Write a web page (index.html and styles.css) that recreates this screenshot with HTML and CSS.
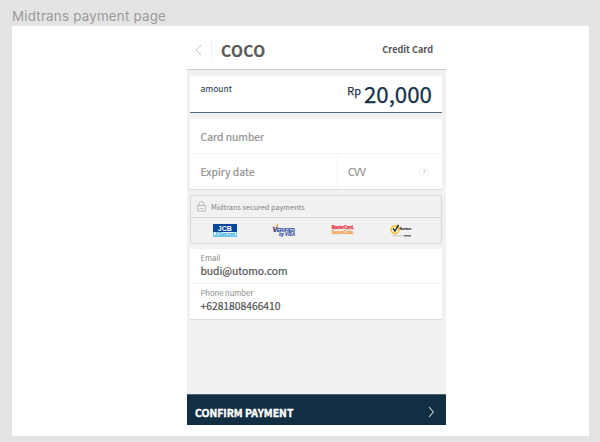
FILE: index.html
```html
<!DOCTYPE html>
<html lang="en">
<head>
<meta charset="utf-8">
<title>Midtrans payment page</title>
<link rel="stylesheet" href="styles.css">
</head>
<body>
<h1 class="frame-title">Midtrans payment page</h1>
<main class="frame">
  <section class="phone">
    <header class="header">
      <svg class="back" width="7" height="12" viewBox="0 0 7 12"><path d="M6 1 1.2 6 6 11"/></svg>
      <span class="merchant">COCO</span>
      <span class="method">Credit Card</span>
    </header>
    <div class="content">
      <div class="card amount">
        <span class="amount-label">amount</span>
        <span class="price"><span class="currency">Rp</span><span class="value">20,000</span></span>
      </div>
      <div class="card">
        <div class="field number"><span class="placeholder">Card number</span></div>
        <div class="field split">
          <div class="expiry"><span class="placeholder">Expiry date</span></div>
          <div class="cvv"><span class="placeholder tight">CVV</span><span class="help">?</span></div>
        </div>
      </div>
      <div class="secured">
        <div class="secured-title">
          <svg width="9" height="11" viewBox="0 0 9 11"><path d="M2.2 4.5V2.8a2.3 2.3 0 0 1 4.6 0v1.7M.6 4.5h7.8v5.6H.6zM2.5 7.5h4"/></svg>
          <span>Midtrans secured payments</span>
        </div>
        <div class="logos">
          <svg width="24" height="13" viewBox="0 0 24 13">
            <rect width="24" height="13" fill="#27a9df"/><rect width="24" height="8" fill="#08469b"/><rect x=".6" y="8" width="22.8" height="4.4" fill="#d9f3fc"/>
            <text x="4.8" y="6.8" class="jcb" textLength="14" lengthAdjust="spacingAndGlyphs">JCB</text><text x="1.6" y="12" class="jsecure" textLength="20.5" lengthAdjust="spacingAndGlyphs">J/Secure</text>
          </svg>
          <svg width="24" height="13" viewBox="0 0 24 13">
            <path d="M.8 2.5 3.3 7 5.6.3" fill="none" stroke="#f2a33a" stroke-width="1.3"/>
            <text x="0.6" y="7.8" class="visa visa-v">V</text><text x="4.8" y="7.8" class="visa" textLength="18" lengthAdjust="spacingAndGlyphs">ERIFIED</text><text x="7" y="12.3" class="visa" textLength="16" lengthAdjust="spacingAndGlyphs">by VISA</text>
          </svg>
          <svg width="24" height="12" viewBox="0 0 24 12">
            <text x="0.8" y="5.4" class="mc red" textLength="22" lengthAdjust="spacingAndGlyphs">MasterCard.</text><text x="0.8" y="10.2" class="mc orange" textLength="22" lengthAdjust="spacingAndGlyphs">SecureCode.</text>
          </svg>
          <svg width="24" height="13" viewBox="0 0 24 13">
            <path d="M6 2h16.5v6.5H6" fill="#f6f6f6" stroke="#e4e4e4" stroke-width=".5"/>
            <circle cx="5" cy="5.8" r="3.8" fill="#fff" stroke="#f5bd25" stroke-width="1.6"/>
            <path d="m3 4.5 2 2.6L8.5.8" fill="none" stroke="#222" stroke-width="1.4"/>
            <text x="9.6" y="6.4" class="norton" textLength="11.5" lengthAdjust="spacingAndGlyphs">Norton</text>
            <path d="M2 11.8h10" stroke="#bbb" stroke-width=".8"/><path d="M13.5 11.8h7.5" stroke="#555" stroke-width="1.2"/>
          </svg>
        </div>
      </div>
      <div class="card contact">
        <div class="field filled"><span class="label">Email</span><span class="text mail">budi@utomo.com</span></div>
        <div class="field filled"><span class="label">Phone number</span><span class="text">+6281808466410</span></div>
      </div>
    </div>
    <footer class="confirm">
      <span>CONFIRM PAYMENT</span>
      <svg width="7" height="12" viewBox="0 0 7 12"><path d="m1 1 4.3 5L1 11"/></svg>
    </footer>
  </section>
</main>
</body>
</html>
```

FILE: styles.css
```css
* { box-sizing: border-box; }
body {
  margin: 0;
  width: 600px;
  height: 442px;
  overflow: hidden;
  padding: 6px 11px 6px 12px;
  background: #e4e4e4;
  font-family: "Noto Sans CJK SC", "Noto Sans", sans-serif;
}
.frame-title {
  margin: 0;
  height: 20px;
  font: 400 13.4px/20px Inter, sans-serif;
  letter-spacing: 0.19px;
  color: #9b9b9b;
  white-space: nowrap;
}
.frame { height: 410px; background: #fff; padding-left: 175px; }
.phone { display: flex; flex-direction: column; width: 259px; height: 399px; background: #f1f1f1; }
.header {
  display: flex;
  align-items: center;
  height: 44px;
  padding: 4px 13px 0 8px;
  border-bottom: 1px solid #cbcbcb;
  background: #fff;
}
.back { fill: none; stroke: #c4c4c4; stroke-width: 1; }
.merchant {
  margin-left: 9px;
  padding-left: 9px;
  border-left: 1px solid #f1f1f1;
  font-size: 15.5px;
  line-height: 24px;
  font-weight: 700;
  letter-spacing: 0.4px;
  color: #5a5a5a;
  -webkit-text-stroke: 0.2px #5a5a5a;
}
.method { margin-left: auto; font-size: 9.1px; line-height: 14px; padding-bottom: 1px; font-weight: 700; color: #555; }
.content { flex: 1; display: flex; flex-direction: column; gap: 6px; padding: 6px 4px 0 3px; }
.card { height: 71px; background: #fff; border-bottom: 1px solid #dedede; }
.amount {
  display: flex;
  justify-content: space-between;
  height: 37px;
  padding: 0 10px;
  border-bottom: 1px solid #4d6779;
  color: #173149;
}
.amount-label { font-size: 8.5px; line-height: 25px; padding-left: 0.5px; }
.price { display: flex; gap: 3px; -webkit-text-stroke: 0.25px #173149; }
.currency { font-size: 10.8px; line-height: 29px; }
.value { font-size: 22.3px; line-height: 35px; }
.field { height: 35px; padding: 0 10px 0 10.5px; display: flex; align-items: center; }
.field:first-child { border-bottom: 1px solid #f3f3f3; }
.field.number { padding-top: 2px; }
.placeholder { font-size: 10.4px; line-height: 16px; color: #919191; -webkit-text-stroke: 0.2px #919191; }
.tight { letter-spacing: -0.5px; }
.field.split { padding: 0; }
.expiry { display: flex; width: 147px; padding-left: 10.5px; }
.cvv {
  flex: 1;
  height: 35px;
  display: flex;
  align-items: center;
  justify-content: space-between;
  padding: 0 13px 0 10px;
  border-left: 1px solid #f3f3f3;
}
.help {
  width: 10px;
  height: 10px;
  border: 1px solid #f0f0f0;
  border-radius: 50%;
  text-align: center;
  font-size: 6px;
  line-height: 8px;
  font-weight: 700;
  color: #c4c4c4;
}
.secured { height: 49px; margin-top: -1px; border: 1px solid #d6d6d6; border-radius: 2px; }
.secured-title {
  display: flex;
  align-items: center;
  gap: 5px;
  height: 22px;
  padding-left: 6px;
  border-bottom: 1px solid #d6d6d6;
  font-size: 7.3px;
  color: #808080;
}
.secured-title svg { fill: none; stroke: #bdbdbd; stroke-width: 1; }
.logos { display: flex; align-items: center; justify-content: space-between; height: 24px; padding: 0 27px 0 22px; }
.logos svg { overflow: visible; }
.logos text { font-family: "Liberation Sans", sans-serif; font-weight: 700; }
.logos .jcb { font-size: 7px; fill: #fff; }
.logos .jsecure { font-size: 4.9px; font-style: italic; fill: #27a9df; }
.logos .visa { font-size: 5.4px; font-style: italic; fill: #29479c; stroke: #29479c; stroke-width: .15; }
.logos .visa-v { font-size: 7px; }
.logos .mc { font-size: 5px; stroke-width: .25; }
.red { fill: #ec2638; stroke: #ec2638; }
.orange { fill: #f6953a; stroke: #f6953a; }
.logos .norton { font-size: 4.2px; fill: #333; stroke: #333; stroke-width: .2; }
.contact { margin-top: -1px; }
.field.filled { flex-direction: column; align-items: flex-start; padding-top: 2px; }
.label { font-size: 7.6px; line-height: 13px; color: #8a8a8a; }
.text { font-size: 10.3px; line-height: 14px; color: #505050; -webkit-text-stroke: 0.2px #505050; }
.confirm {
  display: flex;
  align-items: center;
  justify-content: space-between;
  height: 31px;
  padding: 4px 11px 0 8px;
  border-top: 1px solid #526770;
  background: #122e43;
  color: #fff;
  font-size: 10.4px;
  font-weight: 700;
  -webkit-text-stroke: 0.4px #fff;
}
.confirm svg { fill: none; stroke: #c5ced4; stroke-width: 1.1; }
```
